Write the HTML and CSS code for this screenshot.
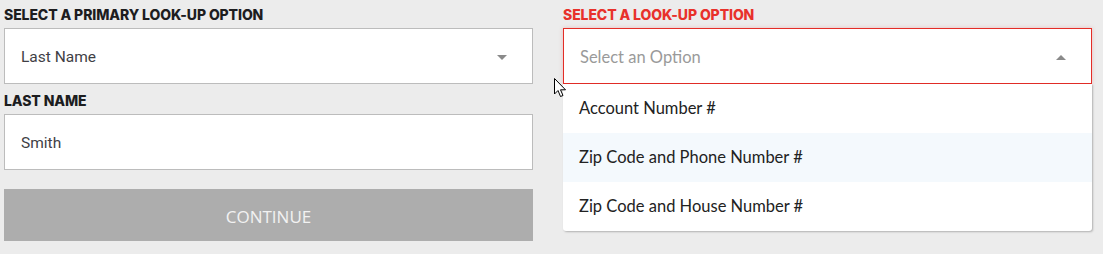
FILE: index.html
```html
<!DOCTYPE html>
<html lang="en">
<head>
<meta charset="utf-8">
<title>Look-up</title>
<link rel="stylesheet" href="styles.css">
</head>
<body>
<div class="page">
  <div class="col">
    <label class="label">SELECT A PRIMARY LOOK-UP OPTION</label>
    <div class="field select">
      <span class="value">Last Name</span>
      <span class="caret down"></span>
    </div>
    <label class="label label-gap">LAST NAME</label>
    <div class="field">
      <span class="value">Smith</span>
    </div>
    <button class="btn">CONTINUE</button>
  </div>
  <div class="col col-right">
    <label class="label error">SELECT A LOOK-UP OPTION</label>
    <div class="dropwrap">
      <div class="field select open">
        <span class="placeholder">Select an Option</span>
        <span class="caret up"></span>
      </div>
      <ul class="menu">
        <li class="item">Account Number #</li>
        <li class="item hover">Zip Code and Phone Number #</li>
        <li class="item">Zip Code and House Number #</li>
      </ul>
    </div>
    <svg class="cursor" width="13" height="20" viewBox="0 0 13 20"><path d="M0.5 0.5 L0.5 16 L4 12.5 L6.5 18.5 L9 17.5 L6.5 11.8 L11.5 11.8 Z" fill="#fff" stroke="#000" stroke-width="1"/></svg>
  </div>
</div>
</body>
</html>
```

FILE: styles.css
```css
* { box-sizing: border-box; }
html, body { margin: 0; padding: 0; }
body {
  background: #ececec;
  width: 1103px;
  height: 254px;
  overflow: hidden;
  font-family: Roboto, "Liberation Sans", sans-serif;
}
.page {
  display: flex;
  gap: 30px;
  padding: 7px 0 0 4px;
}
.col {
  width: 529px;
  display: flex;
  flex-direction: column;
}
.col-right {
  position: relative;
  width: 529px;
}
.label {
  font-family: Inter, "Liberation Sans", sans-serif;
  font-weight: 800;
  font-size: 14px;
  line-height: 16px;
  height: 21px;
  color: #1d1d1f;
  letter-spacing: -0.1px;
  display: block;
}
.label-gap { margin-top: 9px; height: 21px; }
.label.error { color: #e8312b; }
.field {
  height: 56px;
  background: #fff;
  border: 1px solid #bcbcbc;
  display: flex;
  align-items: center;
  padding: 2px 16px 0;
  font-size: 15.5px;
  color: #3f3f45;
}
.select { justify-content: space-between; padding-right: 25px; }
.caret {
  width: 0; height: 0;
  border-left: 5px solid transparent;
  border-right: 5px solid transparent;
}
.caret.down { border-top: 5px solid #8a8a8a; }
.caret.up { border-bottom: 5px solid #8a8a8a; }
.field.open {
  border: 1px solid #e32d27;
  box-shadow: 0 0 4px rgba(227, 45, 39, 0.25);
}
.placeholder {
  color: #9a9a9a;
  font-family: Lato, "Liberation Sans", sans-serif;
  font-size: 16.5px;
}
.btn {
  margin-top: 19px;
  height: 52px;
  border: none;
  background: #adadad;
  color: #f2f2f2;
  font-family: "Open Sans", "Liberation Sans", sans-serif;
  font-size: 17px;
  padding: 2px 0 0;
  width: 529px;
}
.dropwrap { width: 529px; }
.menu {
  list-style: none;
  margin: 0;
  padding: 0;
  background: #fff;
  box-shadow: 1px 1px 2px rgba(0,0,0,0.25);
  border-radius: 0 0 3px 3px;
}
.item {
  height: 49px;
  display: flex;
  align-items: center;
  padding: 0 0 2px 16px;
  font-family: Lato, "Liberation Sans", sans-serif;
  font-size: 16.5px;
  color: #222;
}
.item.hover { background: #f4f9fd; }
.cursor {
  position: absolute;
  left: -9px;
  top: 71px;
}
```
